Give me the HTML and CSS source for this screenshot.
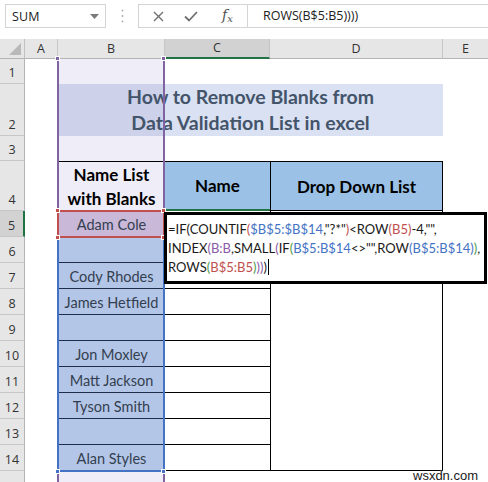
FILE: index.html
```html
<!DOCTYPE html>
<html>
<head>
<meta charset="utf-8">
<link rel="stylesheet" href="styles.css">
</head>
<body>
<div class="app">
  <div class="toolbar">
    <div class="namebox">
      <span class="nb-text">SUM</span>
      <svg class="nb-arrow" width="9" height="5" viewBox="0 0 9 5"><path d="M0 0 H9 L4.5 5 Z" fill="#7a7a7a"/></svg>
    </div>
    <svg class="dots" width="3" height="14" viewBox="0 0 3 14"><circle cx="1.5" cy="1.5" r="1" fill="#b0b0b0"/><circle cx="1.5" cy="7" r="1" fill="#b0b0b0"/><circle cx="1.5" cy="12.5" r="1" fill="#b0b0b0"/></svg>
    <div class="fbar">
      <div class="fbtns">
        <svg class="ic-x" width="11" height="11" viewBox="0 0 11 11"><path d="M1 1 L10 10 M10 1 L1 10" stroke="#707070" stroke-width="1.4"/></svg>
        <svg class="ic-check" width="14" height="11" viewBox="0 0 14 11"><path d="M1 5.5 L5 9.5 L13 1" stroke="#707070" stroke-width="1.8" fill="none"/></svg>
        <span class="ic-fx">f<span class="fx-x">x</span></span>
      </div>
      <div class="finput">ROWS(B$5:B5))))</div>
    </div>
  </div>

  <div class="sheet">
    <div class="corner"><svg width="12" height="12" viewBox="0 0 12 12"><path d="M12 0 V12 H0 Z" fill="#b9b9b9"/></svg></div>
    <div class="ch c-a">A</div>
    <div class="ch c-b">B</div>
    <div class="ch c-c sel">C</div>
    <div class="ch c-d">D</div>
    <div class="ch c-e">E</div>

    <div class="rh r1">1</div>
    <div class="rh r2">2</div>
    <div class="rh r3">3</div>
    <div class="rh r4">4</div>
    <div class="rh r5 sel">5</div>
    <div class="rh r6">6</div>
    <div class="rh r7">7</div>
    <div class="rh r8">8</div>
    <div class="rh r9">9</div>
    <div class="rh r10">10</div>
    <div class="rh r11">11</div>
    <div class="rh r12">12</div>
    <div class="rh r13">13</div>
    <div class="rh r14">14</div>
    <div class="rh r15"></div>

    <div class="colb-bg"></div>

    <div class="title-b"></div>
    <div class="title-cd"></div>
    <div class="title-text"><span>How to Remove Blanks from</span><span>Data Validation List in excel</span></div>

    <div class="hdr-b"><span>Name List</span><span>with Blanks</span></div>
    <div class="hdr-c">Name</div>
    <div class="hdr-d">Drop Down List</div>

    <div class="bn b5">Adam Cole</div>
    <div class="bn bl r6b"></div>
    <div class="bn bl r7b">Cody Rhodes</div>
    <div class="bn bl r8b">James Hetfield</div>
    <div class="bn bl r9b"></div>
    <div class="bn bl r10b">Jon Moxley</div>
    <div class="bn bl r11b">Matt Jackson</div>
    <div class="bn bl r12b">Tyson Smith</div>
    <div class="bn bl r13b"></div>
    <div class="bn bl r14b">Alan Styles</div>

    <div class="cc r6b"></div>
    <div class="cc r7b"></div>
    <div class="cc r8b"></div>
    <div class="cc r9b"></div>
    <div class="cc r10b"></div>
    <div class="cc r11b"></div>
    <div class="cc r12b"></div>
    <div class="cc r13b"></div>
    <div class="cc r14b"></div>

    <div class="dd"></div>

    <!-- selection overlays -->
    <div class="sel-purple"></div>
    <div class="sel-red"></div>
    <div class="sel-blue"></div>
    <div class="hd hd-p1"></div>
    <div class="hd hd-p2"></div>
    <div class="hd hd-r1"></div>
    <div class="hd hd-r2"></div>
    <div class="hd hd-r3"></div>
    <div class="hd hd-r4"></div>
    <div class="hd hd-b1"></div>
    <div class="hd hd-b2"></div>

    <div class="editor">
      <div class="eline">=IF(COUNTIF<span class="kr">(</span><span class="kb">$B$5:$B$14</span>,"?*"<span class="kr">)</span>&lt;ROW<span class="kr">(B5)</span>-4,"",</div>
      <div class="eline">INDEX<span class="kp">(B:B</span>,SMALL<span class="kp">(</span>IF<span class="kg">(</span><span class="kb">B$5:B$14</span>&lt;&gt;"",ROW<span class="kb">(B$5:B$14)</span><span class="kg">)</span>,</div>
      <div class="eline">ROWS<span class="kg">(</span><span class="kr">B$5:B5</span><span class="kg">)</span><span class="kp">))</span>)<span class="caret"></span></div>
    </div>
  </div>

  <div class="wm">wsxdn.com</div>
</div>
</body>
</html>
```
FILE: styles.css
```css
html, body {
  margin: 0;
  padding: 0;
  background: #ffffff;
  overflow: hidden;
}
.app {
  width: 488px;
  height: 482px;
  position: relative;
  overflow: hidden;
  font-family: "Open Sans", "Noto Sans", sans-serif;
}

/* toolbar */
.toolbar {
  height: 39px;
  display: flex;
  align-items: flex-start;
  padding: 4px 0 0 5px;
  box-sizing: border-box;
  background: #ffffff;
}
.namebox {
  width: 101px;
  height: 24px;
  box-sizing: border-box;
  border: 1px solid #d4d4d4;
  display: flex;
  align-items: center;
  justify-content: space-between;
  padding: 0 6px 0 6px;
}
.nb-text {
  font-size: 12.5px;
  color: #222;
  letter-spacing: 0.2px;
}
.nb-arrow { margin-top: 1px; }
.dots {
  margin: 5px 0 0 15px;
}
.fbar {
  margin-left: 14px;
  flex: 1;
  height: 24px;
  display: flex;
  box-sizing: border-box;
  border: 1px solid #d4d4d4;
  border-right: none;
}
.fbtns {
  width: 108px;
  display: flex;
  align-items: center;
  box-sizing: border-box;
  padding-left: 14px;
}
.ic-x { margin-right: 20px; }
.ic-check { margin-right: 24px; }
.ic-fx {
  font-family: "DejaVu Serif", "Liberation Serif", serif;
  font-style: italic;
  font-size: 14px;
  color: #505050;
  line-height: 1;
  margin-top: -2px;
}
.fx-x { font-size: 10px; position: relative; top: 2px; }
.finput {
  flex: 1;
  border-left: 1px solid #d4d4d4;
  font-size: 12.5px;
  color: #222;
  line-height: 22px;
  padding-left: 15px;
}

/* sheet grid */
.sheet {
  position: relative;
  display: grid;
  grid-template-columns: 25px 33px 107px 105px 173px 45px;
  grid-template-rows: 20px 25px 52px 25px 50px repeat(10, 26px) 30px;
  font-family: "Lato", "Open Sans", sans-serif;
}
.corner {
  grid-column: 1; grid-row: 1;
  background: #e6e6e6;
  border-right: 1px solid #c0c0c0;
  border-bottom: 1px solid #b4b4b4;
  display: flex;
  align-items: flex-end;
  justify-content: flex-end;
  padding: 0 3px 3px 0;
}
.ch {
  grid-row: 1;
  background: #e6e6e6;
  border-right: 1px solid #c6c6c6;
  border-bottom: 1px solid #b4b4b4;
  font-family: "Open Sans", sans-serif;
  font-size: 12.5px;
  color: #333;
  display: flex;
  align-items: center;
  justify-content: center;
  line-height: 1;
  padding-top: 1px;
  box-sizing: border-box;
}
.ch.sel {
  background: #d2d2d2;
  border-bottom: 2px solid #217346;
}
.c-a { grid-column: 2; }
.c-b { grid-column: 3; }
.c-c { grid-column: 4; }
.c-d { grid-column: 5; }
.c-e { grid-column: 6; border-right: none; }

.rh {
  grid-column: 1;
  background: #e6e6e6;
  border-right: 1px solid #b4b4b4;
  border-bottom: 1px solid #c6c6c6;
  font-family: "Open Sans", sans-serif;
  font-size: 12.5px;
  color: #333;
  display: flex;
  align-items: flex-end;
  justify-content: center;
  line-height: 1;
  padding-bottom: 4px;
  box-sizing: border-box;
}
.rh.sel {
  background: #d2d2d2;
  border-right: 2px solid #217346;
}
.r1 { grid-row: 2; }
.r2 { grid-row: 3; }
.r3 { grid-row: 4; }
.r4 { grid-row: 5; }
.r5 { grid-row: 6; }
.r6 { grid-row: 7; }
.r7 { grid-row: 8; }
.r8 { grid-row: 9; }
.r9 { grid-row: 10; }
.r10 { grid-row: 11; }
.r11 { grid-row: 12; }
.r12 { grid-row: 13; }
.r13 { grid-row: 14; }
.r14 { grid-row: 15; }
.r15 { grid-row: 16; }

.colb-bg {
  grid-column: 3;
  grid-row: 2 / 17;
  background: #efedf7;
}

.title-b {
  grid-column: 3; grid-row: 3;
  background: #cdd1ea;
}
.title-cd {
  grid-column: 4 / 6; grid-row: 3;
  background: #d9e1f2;
}
.title-text {
  grid-column: 3 / 6; grid-row: 3;
  display: flex;
  flex-direction: column;
  align-items: center;
  justify-content: center;
  color: #44546a;
  font-weight: 700;
  font-size: 19.5px;
  line-height: 26px;
  padding-bottom: 1px;
}

.hdr-b {
  grid-column: 3; grid-row: 5;
  border-top: 1px solid #000;
  display: flex;
  flex-direction: column;
  align-items: center;
  justify-content: center;
  font-weight: 700;
  font-size: 17px;
  line-height: 24px;
  color: #000;
}
.hdr-c, .hdr-d {
  grid-row: 5;
  background: #9bc2e6;
  border-top: 1px solid #000;
  display: flex;
  align-items: center;
  justify-content: center;
  font-weight: 700;
  font-size: 17px;
  color: #000;
  box-sizing: border-box;
}
.hdr-c {
  grid-column: 4;
  border-bottom: 2px solid #217346;
}
.hdr-d {
  grid-column: 5;
  border-left: 1px solid #000;
  border-right: 1px solid #000;
  border-bottom: 1px solid #000;
}

.bn {
  grid-column: 3;
  display: flex;
  align-items: center;
  justify-content: center;
  font-size: 14.5px;
  color: #333f50;
  padding-top: 1px;
  box-sizing: border-box;
}
.b5 { grid-row: 6; background: #c9b8d8; }
.bl {
  background: #b4c6e7;
  border-bottom: 1px solid #1f2d4a;
}
.r6b { grid-row: 7; }
.r7b { grid-row: 8; }
.r8b { grid-row: 9; }
.r9b { grid-row: 10; }
.r10b { grid-row: 11; }
.r11b { grid-row: 12; }
.r12b { grid-row: 13; }
.r13b { grid-row: 14; }
.r14b { grid-row: 15; }

.cc {
  grid-column: 4;
  border-bottom: 1px solid #000;
}
.dd {
  grid-column: 5;
  grid-row: 6 / 16;
  border-left: 1px solid #000;
  border-right: 1px solid #000;
  border-bottom: 1px solid #000;
}

/* selection overlays */
.sel-purple {
  position: absolute;
  left: 57px;
  top: 19px;
  width: 108px;
  height: 480px;
  box-sizing: border-box;
  border-left: 2px solid #8064a2;
  border-right: 2px solid #8064a2;
}
.sel-red {
  position: absolute;
  left: 57px;
  top: 171px;
  width: 108px;
  height: 28px;
  box-sizing: border-box;
  border: 2px solid #c0504d;
}
.sel-blue {
  position: absolute;
  left: 57px;
  top: 198px;
  width: 108px;
  height: 235px;
  box-sizing: border-box;
  border: 2px solid #4472c4;
  border-top: none;
}
.hd {
  position: absolute;
  width: 5px;
  height: 5px;
  box-sizing: border-box;
  border: 1px solid #fff;
}
.hd-p1 { left: 55px; top: 17px; background: #8064a2; }
.hd-p2 { left: 161px; top: 17px; background: #8064a2; }
.hd-r1 { left: 55px; top: 169px; background: #c0504d; }
.hd-r2 { left: 161px; top: 169px; background: #c0504d; }
.hd-r3 { left: 55px; top: 196px; background: #c0504d; }
.hd-r4 { left: 161px; top: 196px; background: #c0504d; }
.hd-b1 { left: 55px; top: 430px; background: #4472c4; }
.hd-b2 { left: 161px; top: 430px; background: #4472c4; }

.editor {
  position: absolute;
  left: 164px;
  top: 173px;
  width: 323px;
  height: 72px;
  box-sizing: border-box;
  border: 3px solid #000;
  background: #fff;
  padding: 5px 0 0 1px;
  font-size: 13px;
  line-height: 19px;
  color: #1a1a1a;
  white-space: nowrap;
  overflow: hidden;
}
.kr { color: #c0504d; }
.kb { color: #4472c4; }
.kp { color: #8a5aa8; }
.kg { color: #4e9a4e; }
.caret {
  display: inline-block;
  width: 1px;
  height: 16px;
  background: #000;
  vertical-align: -3px;
  margin-left: 1px;
}

.wm {
  position: absolute;
  left: 413px;
  top: 468px;
  font-family: "Liberation Sans", Arial, sans-serif;
  font-size: 13px;
  color: #1a1a1a;
  text-shadow: 0 0 2px #fff, 0 0 2px #fff;
}
```
